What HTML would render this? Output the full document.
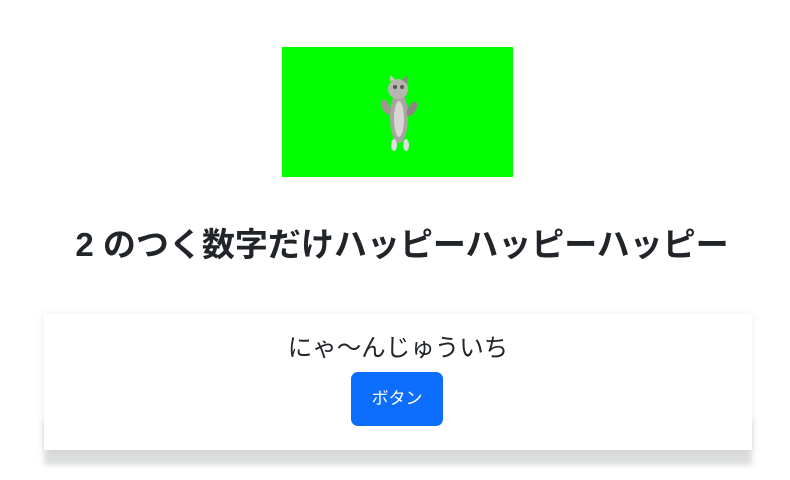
<!DOCTYPE html>
<html><head><meta charset="utf-8"><style>
body{margin:0;width:790px;height:480px;background:#fff;font-family:"Liberation Sans","Noto Sans CJK JP",sans-serif;color:#212529;position:relative;overflow:hidden}
.img{position:absolute;left:282px;top:47px;width:231px;height:130px;background:#00ff00}
h1{position:absolute;left:7px;width:790px;top:222px;margin:0;text-align:center;font-size:33px;font-weight:700;line-height:46px}
.shadow{position:absolute;left:44px;top:420px;width:708px;height:45px;background:#dcdddd;filter:blur(3px)}
.card{position:absolute;left:44px;top:314px;width:708px;height:136px;background:#fff;box-shadow:0 0 8px rgba(0,0,0,.08)}
.t{position:absolute;top:18px;width:100%;text-align:center;font-size:24.5px;line-height:34px}
.btn{position:absolute;left:307px;top:58px;width:92px;height:54px;background:#0d6efd;border-radius:7px;color:#fff;font-size:17px;line-height:54px;text-align:center}
</style></head><body>
<div class="img"><svg width="231" height="130" viewBox="0 0 231 130">
<ellipse cx="117" cy="70" rx="9" ry="26" fill="#a9a4a0"/>
<ellipse cx="117" cy="72" rx="5" ry="18" fill="#d8d6d4"/>
<ellipse cx="116" cy="42" rx="10" ry="10" fill="#b8b4b0"/>
<polygon points="107,34 109,28 113,33" fill="#c9c5c1"/>
<polygon points="120,33 126,28 125,37" fill="#8e8880"/>
<circle cx="113" cy="40" r="2" fill="#555"/><circle cx="120" cy="40" r="2" fill="#555"/>
<ellipse cx="104" cy="60" rx="4" ry="8" fill="#a09890" transform="rotate(-25 104 60)"/>
<ellipse cx="130" cy="62" rx="4" ry="8" fill="#8c8680" transform="rotate(30 130 62)"/>
<ellipse cx="112" cy="98" rx="3" ry="6" fill="#ddd"/><ellipse cx="124" cy="98" rx="3" ry="6" fill="#ddd"/>
</svg></div>
<h1>2 のつく数字だけハッピーハッピーハッピー</h1>
<div class="shadow"></div>
<div class="card"><div class="t">にゃ〜んじゅういち</div><div class="btn">ボタン</div></div>
</body></html>
